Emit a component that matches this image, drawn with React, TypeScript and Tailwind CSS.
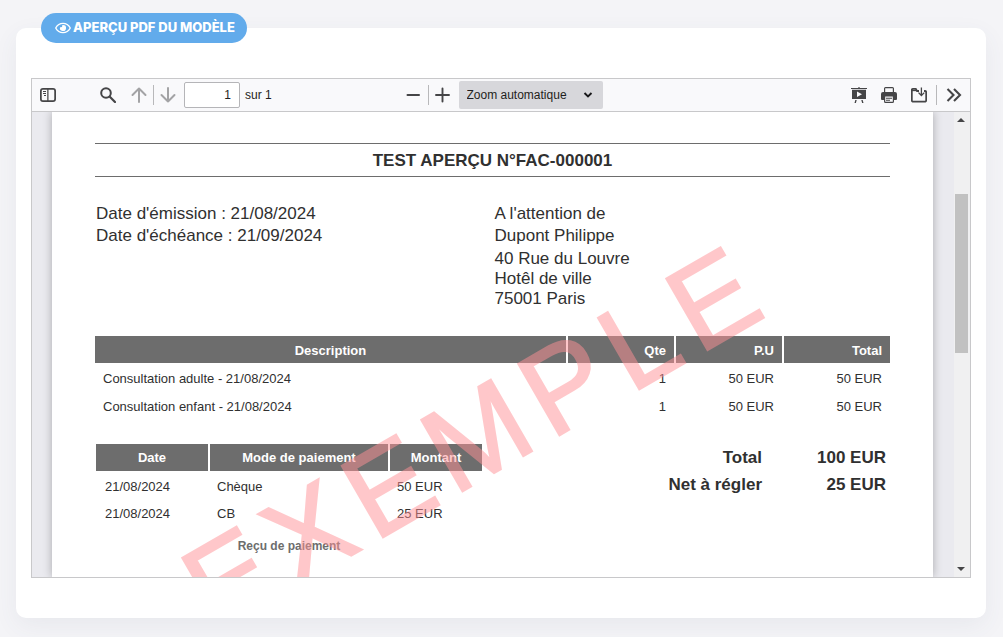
import React, { useState } from 'react';

interface InvoiceLine {
  description: string;
  quantity: number;
  unitPrice: string;
  total: string;
}

interface Payment {
  date: string;
  mode: string;
  amount: string;
}

interface ToolbarButtonProps {
  title: string;
  disabled?: boolean;
  children: React.ReactNode;
}

const invoiceLines: InvoiceLine[] = [
  { description: 'Consultation adulte - 21/08/2024', quantity: 1, unitPrice: '50 EUR', total: '50 EUR' },
  { description: 'Consultation enfant - 21/08/2024', quantity: 1, unitPrice: '50 EUR', total: '50 EUR' },
];

const payments: Payment[] = [
  { date: '21/08/2024', mode: 'Chèque', amount: '50 EUR' },
  { date: '21/08/2024', mode: 'CB', amount: '25 EUR' },
];

const ToolbarButton = ({ title, disabled = false, children }: ToolbarButtonProps) => (
  <button
    type="button"
    title={title}
    aria-label={title}
    disabled={disabled}
    className="flex h-7 w-7 items-center justify-center rounded-xs text-[#454547] hover:bg-[#dddedf] disabled:text-[#a3a3a5] disabled:hover:bg-transparent"
  >
    <svg viewBox="0 0 16 16" className="h-4 w-4" fill="currentColor" aria-hidden="true">
      {children}
    </svg>
  </button>
);

const Separator = () => <div className="h-5 w-px bg-[#b8b8ba]" />;

const EyeIcon = () => (
  <svg viewBox="0 0 576 512" className="h-[14px] w-4" fill="currentColor" aria-hidden="true">
    <path d="M288 144a110.94 110.94 0 0 0-31.24 5 55.400 55.400 0 0 1 7.240 27 56 56 0 0 1-56 56 55.400 55.400 0 0 1-27-7.240A111.710 111.710 0 1 0 288 144zm284.520 97.400C518.290 135.590 410.930 64 288 64S57.680 135.640 3.480 241.410a32.350 32.350 0 0 0 0 29.190C57.710 376.410 165.070 448 288 448s230.320-71.640 284.520-177.410a32.350 32.350 0 0 0 0-29.190zM288 400c-98.650 0-189.090-55-237.930-144C98.910 167 189.340 112 288 112s189.090 55 237.930 144C477.100 345 386.660 400 288 400z" />
  </svg>
);

const PdfToolbar = () => {
  const [page, setPage] = useState('1');
  const [zoom, setZoom] = useState('auto');

  return (
    <div className="flex h-[33px] items-center border-b border-[#c8c8ca] bg-[#f9f9fb] px-0.5 text-xs text-[#1f1f20]">
      {/* Left side */}
      <div className="flex flex-1 items-center">
        <ToolbarButton title="Afficher/Masquer le panneau latéral">
          <path d="M3 1a3 3 0 0 0-3 3v8a3 3 0 0 0 3 3h10a3 3 0 0 0 3-3V4a3 3 0 0 0-3-3H3zm4.250 12.250H3c-.69 0-1.250-.56-1.250-1.250V4c0-.69.56-1.250 1.250-1.250h4.250v10.500zM14.250 12c0 .69-.56 1.250-1.250 1.250H8.500V2.750H13c.69 0 1.250.56 1.250 1.250v8z" />
          <path d="M3 4h3v1H3zM3 6h3v1H3zM4 8h2v1H4z" />
        </ToolbarButton>
        <div className="ml-8 flex items-center">
          <ToolbarButton title="Rechercher">
            <circle cx="6" cy="6" r="4.800" fill="none" stroke="currentColor" strokeWidth="2" />
            <path d="M9.800 9.800l5.200 5.200" fill="none" stroke="currentColor" strokeWidth="2.200" strokeLinecap="round" />
          </ToolbarButton>
        </div>
        <div className="ml-[3px] flex items-center">
          <ToolbarButton title="Page précédente" disabled>
            <path d="M8 15V1.500M1.500 8L8 1.500 14.500 8" fill="none" stroke="currentColor" strokeWidth="2" strokeLinecap="round" strokeLinejoin="round" />
          </ToolbarButton>
          <Separator />
          <ToolbarButton title="Page suivante" disabled>
            <path d="M8 1v13.500M1.500 8L8 14.500 14.500 8" fill="none" stroke="currentColor" strokeWidth="2" strokeLinecap="round" strokeLinejoin="round" />
          </ToolbarButton>
        </div>
        <input
          type="text"
          aria-label="Page"
          value={page}
          onChange={(e) => setPage(e.target.value)}
          className="ml-0.5 h-[26px] w-14 rounded-xs border border-[#b5b5b8] bg-white px-2 text-right"
        />
        <span className="ml-[5px]">sur 1</span>
      </div>

      {/* Zoom */}
      <div className="flex items-center">
        <ToolbarButton title="Zoom arrière">
          <path d="M1.500 8h11.500" fill="none" stroke="currentColor" strokeWidth="2" strokeLinecap="round" />
        </ToolbarButton>
        <Separator />
        <ToolbarButton title="Zoom avant">
          <path d="M1 8h13M7.500 1.500v13" fill="none" stroke="currentColor" strokeWidth="1.900" strokeLinecap="round" />
        </ToolbarButton>
        <div className="relative ml-0.5">
          <select
            aria-label="Zoom"
            value={zoom}
            onChange={(e) => setZoom(e.target.value)}
            className="h-7 w-36 appearance-none rounded-xs bg-[#d7d7db] pl-2 pr-8"
          >
            <option value="auto">Zoom automatique</option>
            <option value="page-width">Pleine largeur</option>
            <option value="1">100 %</option>
          </select>
          <svg viewBox="0 0 10 6" className="pointer-events-none absolute right-[10px] top-[11px] h-[6px] w-[10px]" aria-hidden="true">
            <path d="M1.500 1L5 4.500 8.500 1" fill="none" stroke="#18181a" strokeWidth="1.900" />
          </svg>
        </div>
      </div>

      {/* Right side */}
      <div className="flex flex-1 items-center justify-end">
        <div className="flex items-center gap-0.5">
          <ToolbarButton title="Mode présentation">
            <path d="M7.400 0h1.200v.9H16V2H0V.9h7.400zM1 2.800h14V12H1zM6 4.500v5.600l5-2.800z" fillRule="evenodd" />
            <path d="M4.300 13h1.400l-.8 3H3.500zM10.300 13h1.400l.8 3h-1.400z" />
          </ToolbarButton>
          <ToolbarButton title="Imprimer">
            <path d="M4.500 0h7A1.500 1.500 0 0 1 13 1.500V5h1a2 2 0 0 1 2 2v5a1 1 0 0 1-1 1h-2v1.500a1.500 1.500 0 0 1-1.500 1.500h-7A1.500 1.500 0 0 1 3 14.500V13H1a1 1 0 0 1-1-1V7a2 2 0 0 1 2-2h1V1.500A1.500 1.500 0 0 1 4.500 0zM4.200 1.200V5h7.600V1.200zM4.200 9.500v5.300h7.600V9.500z" fillRule="evenodd" />
            <path d="M5 10.700h6v1H5zM5 12.700h4v1H5z" />
          </ToolbarButton>
          <ToolbarButton title="Enregistrer">
            <path d="M8 4H6L4.800 1.800H2A1.200 1.200 0 0 0 .8 3v10.200A1.500 1.500 0 0 0 2.300 14.700h11.400a1.500 1.500 0 0 0 1.500-1.500V5.300A1.300 1.300 0 0 0 13.900 4H13" fill="none" stroke="currentColor" strokeWidth="1.800" />
            <path d="M1 3.500h5" fill="none" stroke="currentColor" strokeWidth="1.300" />
            <path d="M10.400.5v7.700M7.500 5.600l2.900 2.900 2.900-2.900" fill="none" stroke="currentColor" strokeWidth="1.300" />
          </ToolbarButton>
        </div>
        <div className="ml-[3px] flex items-center gap-[3px]">
          <Separator />
          <ToolbarButton title="Outils">
            <path d="M1.500 2l6 6-6 6M8 2l6 6-6 6" fill="none" stroke="currentColor" strokeWidth="2.100" />
          </ToolbarButton>
        </div>
      </div>
    </div>
  );
};

const InvoiceTable = () => (
  <table className="mt-[27px] w-full table-fixed border-separate border-spacing-0 text-[13px] leading-5">
    <thead>
      <tr className="h-[27px] bg-[#6d6d6d] text-white">
        <th className="px-2 pt-0.5">Description</th>
        <th className="w-27 border-l-2 border-white px-2 pt-0.5 text-right">Qte</th>
        <th className="w-27 border-l-2 border-white px-2 pt-0.5 text-right">P.U</th>
        <th className="w-27 border-l-2 border-white px-2 pt-0.5 text-right">Total</th>
      </tr>
    </thead>
    <tbody>
      {invoiceLines.map((line) => (
        <tr key={line.description} className="h-7">
          <td className="px-2 pt-1">{line.description}</td>
          <td className="px-2 pt-1 text-right">{line.quantity}</td>
          <td className="px-2 pt-1 text-right">{line.unitPrice}</td>
          <td className="px-2 pt-1 text-right">{line.total}</td>
        </tr>
      ))}
    </tbody>
  </table>
);

const PaymentTable = () => (
  <div className="w-[386px]">
    <table className="w-full table-fixed border-separate border-spacing-0 text-[13px] leading-5">
      <thead>
        <tr className="h-[27px] bg-[#6d6d6d] text-white">
          <th className="w-28 px-2">Date</th>
          <th className="border-l-2 border-white px-2">Mode de paiement</th>
          <th className="w-[94px] border-l-2 border-white px-2">Montant</th>
        </tr>
      </thead>
      <tbody>
        {payments.map((payment) => (
          <tr key={payment.mode} className="h-[27px]">
            <td className="px-[9px] pt-1">{payment.date}</td>
            <td className="px-[9px] pt-1">{payment.mode}</td>
            <td className="px-[9px] pt-1">{payment.amount}</td>
          </tr>
        ))}
      </tbody>
    </table>
    <p className="mt-[11px] text-center text-xs leading-5 font-bold text-[#6d6d6d]">Reçu de paiement</p>
  </div>
);

const InvoicePage = () => (
  <div className="relative mr-[21px] ml-5 min-h-full flex-1 overflow-hidden bg-white px-[43px] pt-[31px] text-[#303030] shadow-[0_0_9px_rgba(0,0,0,0.28)]">
    <h1 className="border-y border-[#6d6d6d] pt-0.5 text-center text-[17px] leading-[30px] font-bold">
      TEST APERÇU N°FAC-000001
    </h1>

    <div className="mt-[26px] grid grid-cols-2 text-[17px] leading-[22px]">
      <div className="pl-px">
        <p>Date d'émission : 21/08/2024</p>
        <p>Date d'échéance : 21/09/2024</p>
      </div>
      <div className="pl-0.5">
        <p>A l'attention de</p>
        <p>Dupont Philippe</p>
        <address className="mt-0.5 leading-5 not-italic">
          40 Rue du Louvre
          <br />
          Hotêl de ville
          <br />
          75001 Paris
        </address>
      </div>
    </div>

    <InvoiceTable />

    <div className="mt-[25px] flex items-start justify-between pl-px">
      <PaymentTable />
      <table className="text-right text-[17px] leading-[27px]">
        <tbody>
          <tr>
            <th>Total</th>
            <td className="w-32 pr-1 font-bold">100 EUR</td>
          </tr>
          <tr>
            <th>Net à régler</th>
            <td className="w-32 pr-1 font-bold">25 EUR</td>
          </tr>
        </tbody>
      </table>
    </div>

    {/* Watermark */}
    <div className="pointer-events-none absolute top-[434px] left-[112px] origin-top-left -rotate-30 text-[120px] leading-none tracking-widest whitespace-nowrap text-[#ff9196] opacity-50 [-webkit-text-stroke:2px_#ff9196]">
      EXEMPLE
    </div>
  </div>
);

const ScrollBar = () => (
  <div className="flex w-4 flex-col items-center bg-[#f0f0f1] py-1.5 pr-0.5" aria-hidden="true">
    <svg viewBox="0 0 8 4" className="h-1 w-2">
      <path d="M0 4L4 0l4 4z" fill="#454547" />
    </svg>
    <div className="mt-[72px] h-[159px] w-[13px] bg-[#c1c1c1]" />
    <svg viewBox="0 0 8 4" className="mt-auto h-1 w-2">
      <path d="M0 0l4 4 4-4z" fill="#454547" />
    </svg>
  </div>
);

export default function App() {
  return (
    <div className="min-h-screen bg-[#f4f4f7] px-4 pt-7 pb-[19px] font-['Liberation_Sans',sans-serif]">
      <div className="mr-px rounded-[10px] bg-white px-[15px] pb-10 shadow-[0_8px_24px_rgba(70,80,120,0.07)]">
        <div className="-translate-y-[15px] pl-[10px]">
          <h2 className="inline-flex h-[30px] items-center gap-0.5 rounded-full bg-[#62abeb] pr-3 pl-[14px] align-top font-[Inter,sans-serif] text-[13px] font-extrabold text-white">
            <EyeIcon />
            APERÇU PDF DU MODÈLE
          </h2>
        </div>

        <div className="mt-5 flex h-[500px] flex-col border border-[#c8c8ca]">
          <PdfToolbar />
          <div className="flex min-h-0 flex-1 overflow-hidden bg-[#eaeaef]">
            <InvoicePage />
            <ScrollBar />
          </div>
        </div>
      </div>
    </div>
  );
}
